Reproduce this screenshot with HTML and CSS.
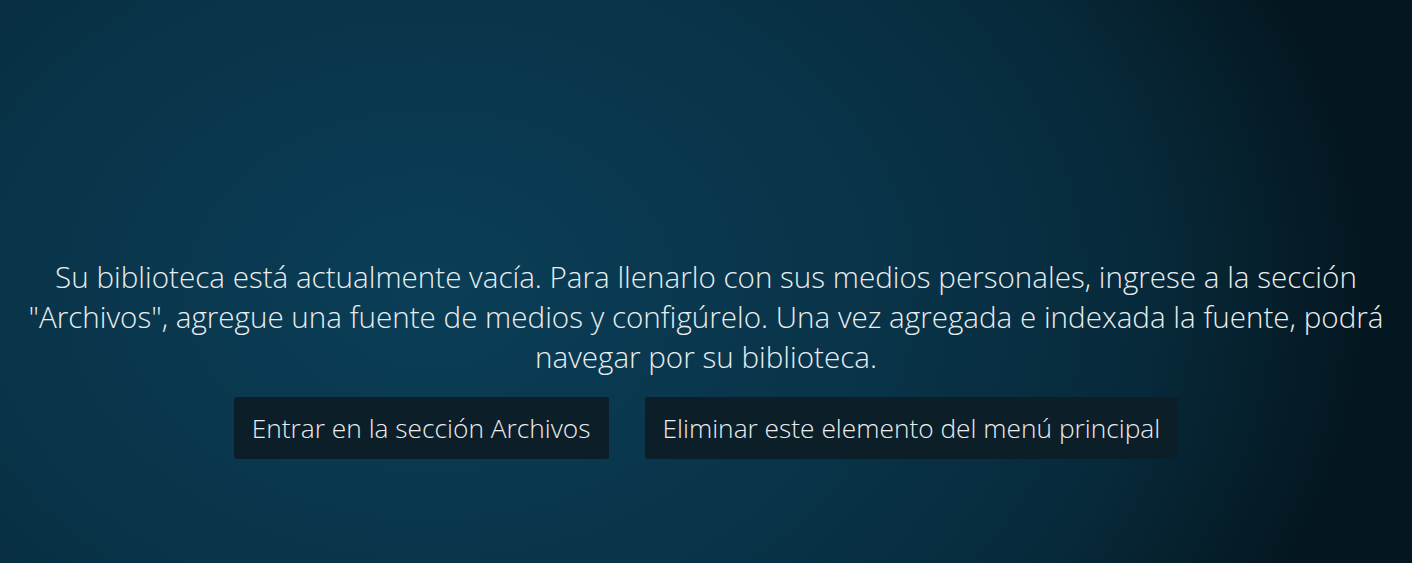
FILE: index.html
```html
<!DOCTYPE html>
<html lang="es">
<head>
<meta charset="utf-8">
<title>Biblioteca</title>
<link rel="stylesheet" href="styles.css">
</head>
<body>
<main class="screen">
  <p class="message">Su biblioteca está actualmente vacía. Para llenarlo con sus medios personales, ingrese a la sección "Archivos", agregue una fuente de medios y configúrelo. Una vez agregada e indexada la fuente, podrá navegar por su biblioteca.</p>
  <div class="actions">
    <button class="btn">Entrar en la sección Archivos</button>
    <button class="btn">Eliminar este elemento del menú principal</button>
  </div>
</main>
</body>
</html>
```
FILE: styles.css
```css
html, body {
  margin: 0;
  padding: 0;
  height: 100%;
}
body {
  background: radial-gradient(ellipse 950px 700px at 430px 290px, #0a3e57 0%, #093449 45%, #072a3b 75%, #04161f 100%);
  overflow: hidden;
  font-family: "Open Sans", "Noto Sans", sans-serif;
  font-weight: 300;
  color: #e9edef;
}
.screen {
  display: flex;
  flex-direction: column;
  align-items: center;
  padding-top: 257px;
  height: 100%;
  box-sizing: border-box;
}
.message {
  margin: 0;
  max-width: 1380px;
  text-align: center;
  font-size: 29.6px;
  line-height: 40px;
}
.actions {
  display: flex;
  gap: 36px;
  margin-top: 20px;
}
.btn {
  font-family: inherit;
  font-weight: 300;
  font-size: 26.3px;
  color: #e9edef;
  background: #0c1e28;
  border: none;
  border-radius: 3px;
  height: 62px;
  padding: 0 18px;
  cursor: pointer;
}
```
